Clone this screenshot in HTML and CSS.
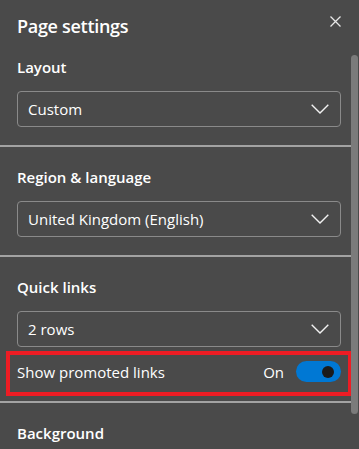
FILE: index.html
```html
<html>
<head>
  <title>Page settings</title>
  <link rel="stylesheet" href="styles.css">
</head>
<body>

  <div id="panel">
    <div id="content">

      <header class="panel-header">
        <h1 class="panel-title">Page settings</h1>
        <button class="close-btn" aria-label="Close">
          <svg width="11" height="11" viewBox="0 0 11 11">
            <path d="M0.5 0.5 L10.5 10.5 M10.5 0.5 L0.5 10.5" stroke="#e8e8e8" stroke-width="1.3" fill="none"/>
          </svg>
        </button>
      </header>

      <section class="group">
        <h2 class="group-title">Layout</h2>
        <div class="select">
          <span class="select-value">Custom</span>
          <svg class="chevron" width="18" height="10" viewBox="0 0 18 10">
            <path d="M0.7 0.7 L9 9 L17.3 0.7" stroke="#f2f2f2" stroke-width="1.4" fill="none"/>
          </svg>
        </div>
      </section>

      <section class="group">
        <h2 class="group-title">Region &amp; language</h2>
        <div class="select">
          <span class="select-value">United Kingdom (English)</span>
          <svg class="chevron" width="18" height="10" viewBox="0 0 18 10">
            <path d="M0.7 0.7 L9 9 L17.3 0.7" stroke="#f2f2f2" stroke-width="1.4" fill="none"/>
          </svg>
        </div>
      </section>

      <section class="group group-links">
        <h2 class="group-title">Quick links</h2>
        <div class="select">
          <span class="select-value">2 rows</span>
          <svg class="chevron" width="18" height="10" viewBox="0 0 18 10">
            <path d="M0.7 0.7 L9 9 L17.3 0.7" stroke="#f2f2f2" stroke-width="1.4" fill="none"/>
          </svg>
        </div>
        <!-- highlighted row -->
        <div class="toggle-row">
          <span class="toggle-label">Show promoted links</span>
          <span class="toggle-state">On</span>
          <span class="toggle is-on"><span class="knob"></span></span>
        </div>
      </section>

      <section class="group group-last">
        <h2 class="group-title">Background</h2>
      </section>

    </div>

    <div id="scrollbar"><div class="thumb"></div></div>
  </div>

</body>
</html>
```

FILE: styles.css
```css
body {
  margin: 0;
  height: 449px;
  overflow: hidden;
  background-color: #4a4a4a;
  color: #ffffff;
  font-family: "Open Sans", "Noto Sans", sans-serif;
}

#panel {
  display: flex;
  height: 449px;
  overflow: hidden;
}

#content {
  width: 351px;
  flex-shrink: 0;
}

.panel-header {
  display: flex;
  justify-content: space-between;
  align-items: flex-start;
  height: 37px;
  padding: 0 10px 0 17px;
  box-sizing: border-box;
}

.panel-title {
  margin: 15px 0 0 0;
  font-size: 18px;
  font-weight: 600;
  line-height: 22px;
  letter-spacing: -0.3px;
}

.close-btn {
  margin-top: 16px;
  padding: 0;
  border: none;
  background: none;
  width: 11px;
  height: 11px;
  display: flex;
}

.group {
  padding: 20px 10px 18px 17px;
  border-bottom: 2px solid #a3a3a3;
}

.group-title {
  margin: 0 0 14px 0;
  font-size: 15px;
  font-weight: 600;
  line-height: 20px;
}

.select {
  display: flex;
  align-items: center;
  justify-content: space-between;
  height: 36px;
  box-sizing: border-box;
  padding: 0 11px 0 10px;
  border: 1px solid #8a8a8a;
  border-radius: 4px;
  font-size: 15px;
}

.chevron {
  display: block;
}

.group-links {
  padding-bottom: 5px;
}

.group-last {
  border-bottom: none;
  padding-bottom: 0;
}

.toggle-row {
  display: flex;
  align-items: center;
  height: 45px;
  box-sizing: border-box;
  margin: 4px -11px 0 -11px;
  padding: 0 7px 4px 7px;
  border: 4px solid #ed1c24;
  font-size: 15px;
  line-height: 20px;
}

.toggle-label {
  flex: 1;
}

.toggle-state {
  margin-right: 12px;
}

.toggle {
  display: flex;
  align-items: center;
  justify-content: flex-end;
  width: 45px;
  height: 21px;
  box-sizing: border-box;
  padding-right: 7px;
  border-radius: 11px;
  background-color: #0078d4;
}

.knob {
  width: 12px;
  height: 12px;
  border-radius: 50%;
  background-color: #1b1b1b;
}

#scrollbar {
  width: 8px;
}

#scrollbar .thumb {
  width: 7px;
  height: 359px;
  margin-top: 55px;
  border-radius: 4px;
  background-color: #7b7b7b;
}
```
